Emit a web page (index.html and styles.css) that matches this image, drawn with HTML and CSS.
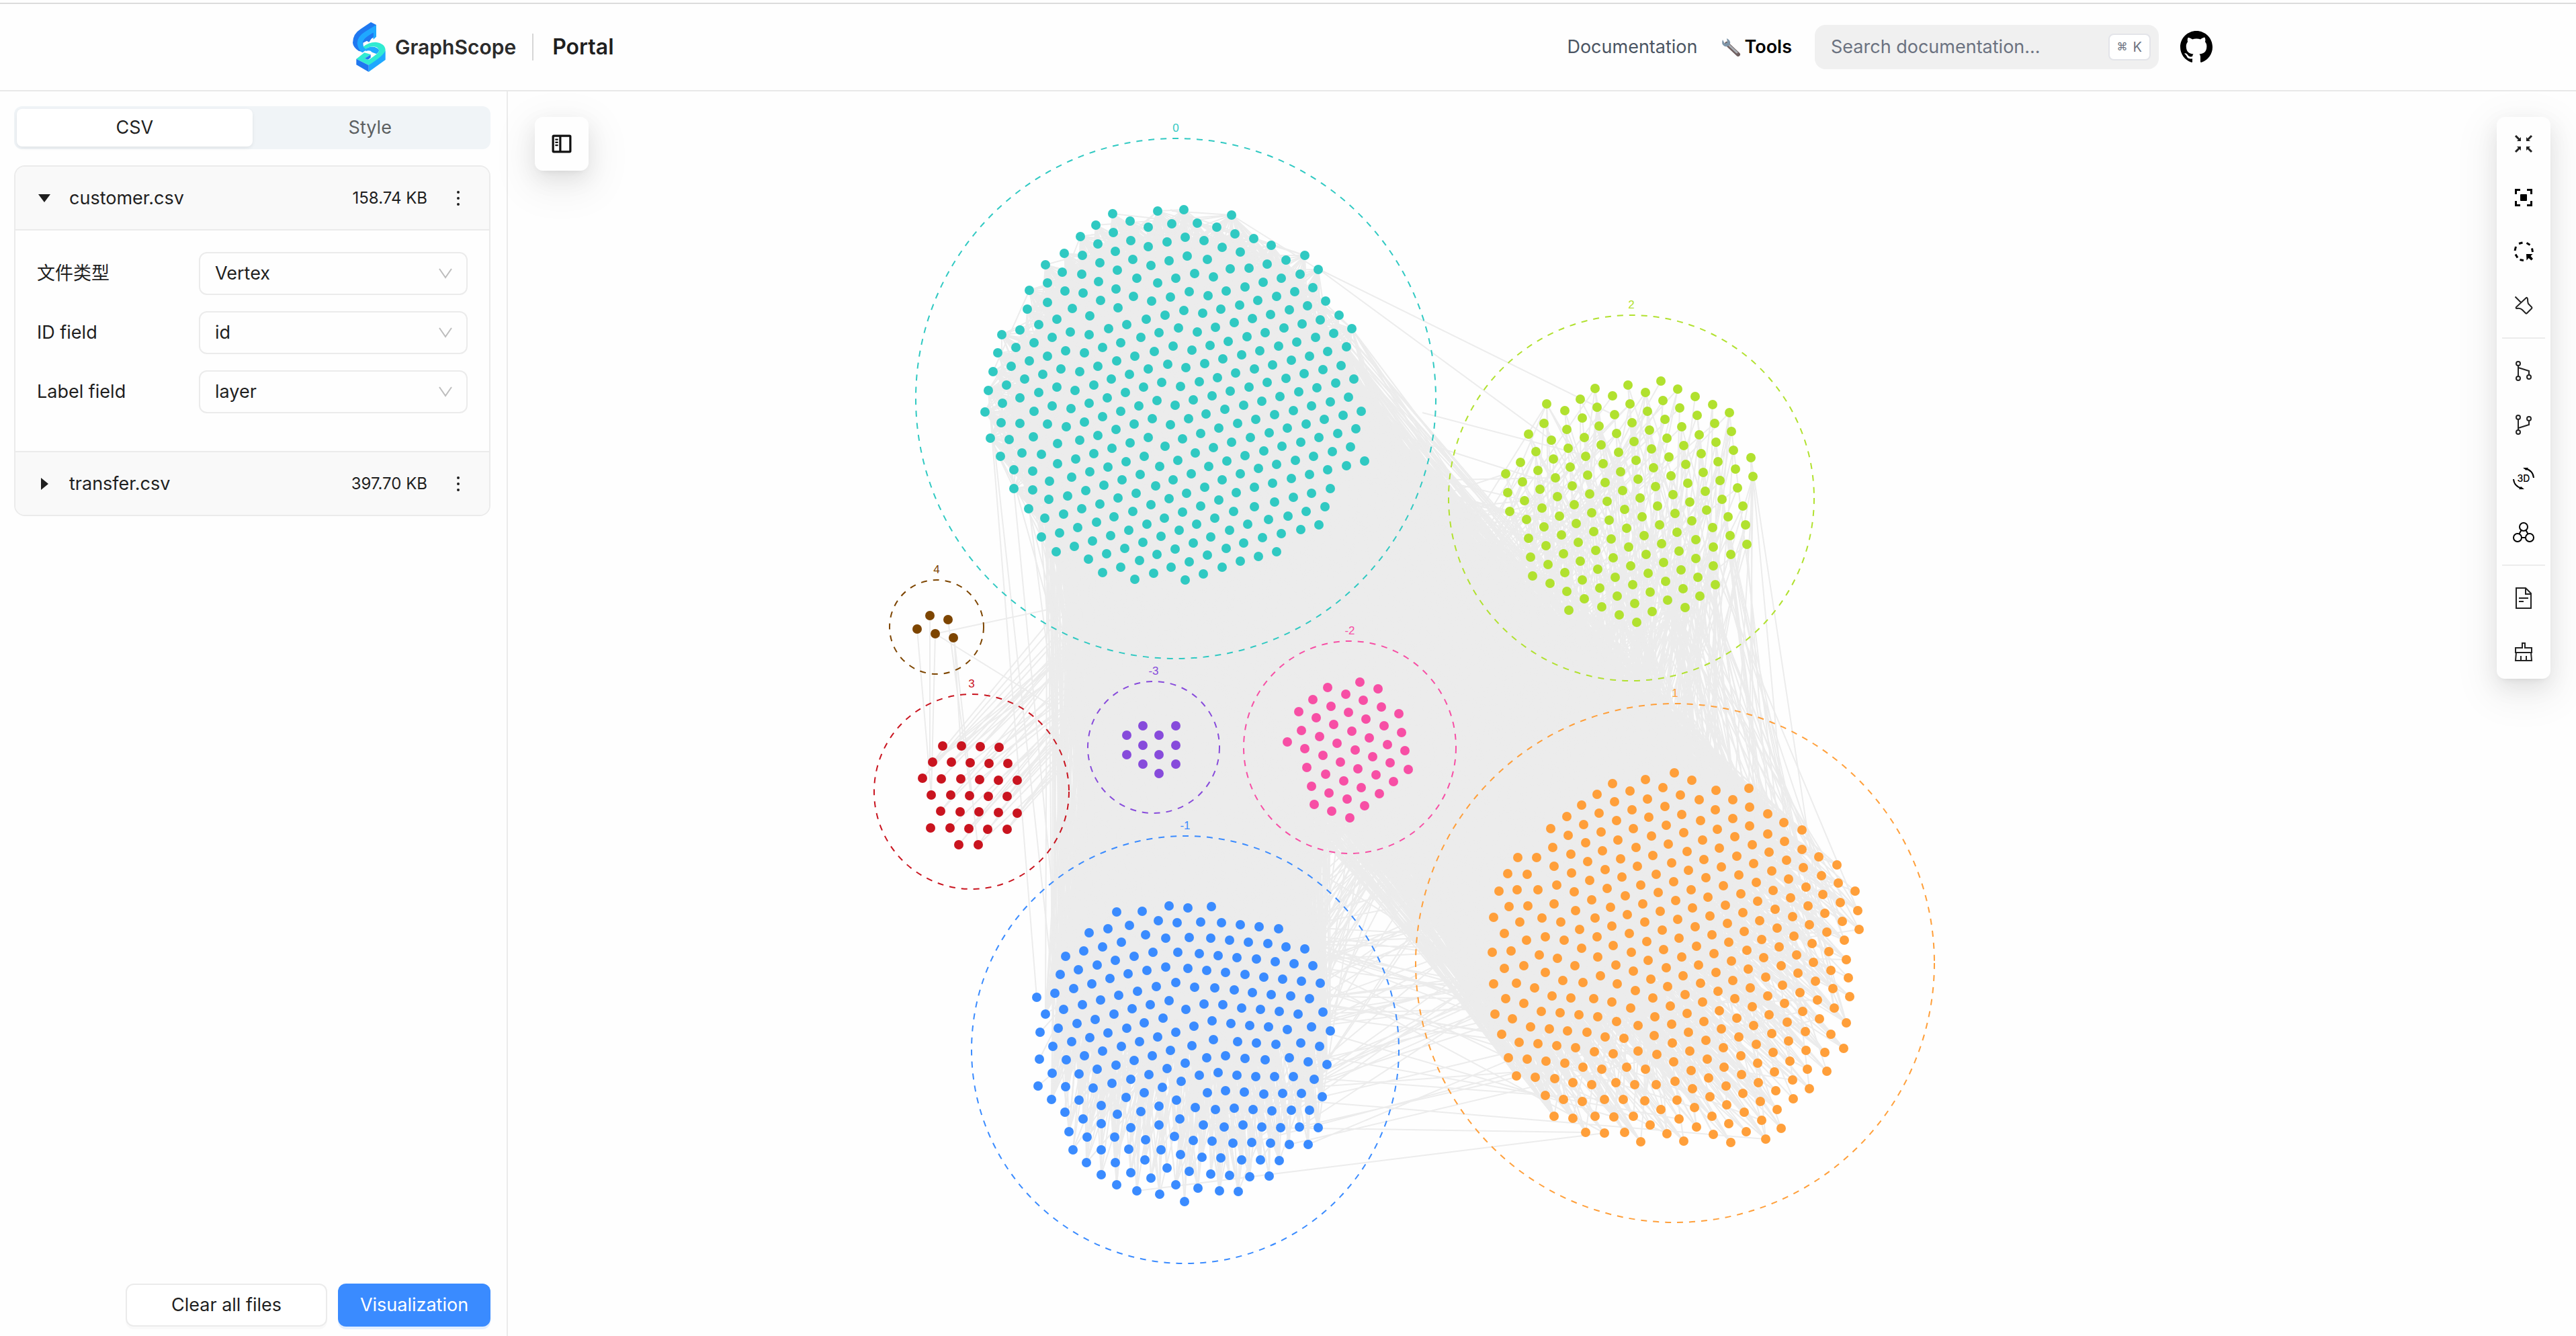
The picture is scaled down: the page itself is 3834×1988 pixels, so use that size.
FILE: index.html
```html
<!DOCTYPE html>
<html lang="en">
<head>
<meta charset="utf-8">
<meta name="viewport" content="width=device-width, initial-scale=1">
<title>GraphScope Portal</title>
<link rel="stylesheet" href="styles.css">
</head>
<body>
<header class="header">
  <div class="header-inner">
    <a class="brand" href="#">
      <svg class="brand-mark" viewBox="74 98 147 222" aria-hidden="true">
        <path fill="#1f78f0" d="M155 98L110 128Q74 150 74 190Q76 210 100 226L122 232L120 190L179 160V110Z"/>
        <path fill="#1fa8ff" d="M179 110L130 140Q94 162 94 192Q96 218 116 234L136 222L122 206Q112 190 126 174Q132 166 166 145L166 175L179 163Z"/>
        <path fill="#1f78f0" d="M166 145V158L147 187L125 175Q135 162 166 145Z"/>
        <path fill="#1fa8ff" d="M220 225V266L145 320V286Z"/>
        <path fill="#1fa8ff" d="M132 216Q160 200 185 215Q200 225 180 240L160 232Q150 220 132 228Z"/>
        <path fill="#30ebd2" d="M120 208Q146 187 175 187Q218 192 220 222Q218 244 145 290L90 262L126 234L155 242L127 260L145 266Q190 238 192 225Q186 204 160 207Q142 210 132 217Z"/>
        <path fill="#1f78f0" d="M90 262L145 290V320L90 288Z"/>
        <path fill="#1f78f0" d="M154 243V256L143 265L127 260Z"/>
      </svg>
      <span class="brand-name">GraphScope</span>
      <span class="brand-section">Portal</span>
    </a>
    <nav class="nav">
      <a class="nav-link" href="#">Documentation</a>
      <a class="nav-link nav-link-active" href="#">
        <svg class="wrench" viewBox="0 0 30 28" aria-hidden="true">
          <path d="M9 9L26 25" stroke="#6f5f5f" stroke-width="6" stroke-linecap="round"/>
          <path d="M10 9L24 22" stroke="#a8adb3" stroke-width="3" stroke-linecap="round"/>
          <path d="M3 3Q0 10 6 13Q12 14 14 9Q15 4 9 1L10 7L6 9Z" fill="#7d95a8"/>
        </svg>
        Tools
      </a>
      <label class="search">
        <input class="search-input" type="search" placeholder="Search documentation..." aria-label="Search documentation">
        <kbd class="search-key"><span class="cmd">⌘</span>K</kbd>
      </label>
      <a class="github" href="#" aria-label="GitHub">
        <svg viewBox="0 0 16 16" fill="#000"><path d="M8 0C3.58 0 0 3.58 0 8c0 3.54 2.29 6.53 5.47 7.59.4.07.55-.17.55-.38 0-.19-.01-.82-.01-1.49-2.01.37-2.53-.49-2.69-.94-.09-.23-.48-.94-.82-1.13-.28-.15-.68-.52-.01-.53.63-.01 1.08.58 1.23.82.72 1.21 1.87.87 2.33.66.07-.52.28-.87.51-1.07-1.78-.2-3.64-.89-3.64-3.95 0-.87.31-1.59.82-2.15-.08-.2-.36-1.02.08-2.12 0 0 .67-.21 2.2.82.64-.18 1.32-.27 2-.27s1.36.09 2 .27c1.53-1.04 2.2-.82 2.2-.82.44 1.1.16 1.92.08 2.12.51.56.82 1.27.82 2.15 0 3.07-1.87 3.75-3.65 3.95.29.25.54.73.54 1.48 0 1.07-.01 1.93-.01 2.2 0 .21.15.46.55.38A8.01 8.01 0 0 0 16 8c0-4.42-3.58-8-8-8z"/></svg>
      </a>
    </nav>
  </div>
</header>

<div class="workspace">
  <aside class="sidebar">
    <div class="tabs" role="tablist">
      <button class="tab tab-selected" role="tab" aria-selected="true">CSV</button>
      <button class="tab" role="tab" aria-selected="false">Style</button>
    </div>

    <div class="files">
      <section class="file">
        <div class="file-head">
          <button class="file-toggle" aria-expanded="true">
            <svg class="caret" viewBox="0 0 18 18" aria-hidden="true"><path d="M0 3H18L9 15Z"/></svg>
            customer.csv
          </button>
          <span class="file-size">158.74 KB</span>
          <button class="more" aria-label="More"><svg viewBox="0 0 24 24"><circle cx="12" cy="3" r="2"/><circle cx="12" cy="12" r="2"/><circle cx="12" cy="21" r="2"/></svg></button>
        </div>
        <form class="fields">
          <label class="field-label" for="kind">文件类型</label>
          <div class="select">
            <select id="kind"><option>Vertex</option><option>Edge</option></select>
            <svg class="chevron" viewBox="0 0 22 16" aria-hidden="true"><path d="M2 1L11 14L20 1"/></svg>
          </div>
          <label class="field-label" for="idf">ID field</label>
          <div class="select">
            <select id="idf"><option>id</option></select>
            <svg class="chevron" viewBox="0 0 22 16" aria-hidden="true"><path d="M2 1L11 14L20 1"/></svg>
          </div>
          <label class="field-label" for="labelf">Label field</label>
          <div class="select">
            <select id="labelf"><option>layer</option></select>
            <svg class="chevron" viewBox="0 0 22 16" aria-hidden="true"><path d="M2 1L11 14L20 1"/></svg>
          </div>
        </form>
      </section>
      <section class="file">
        <div class="file-head">
          <button class="file-toggle" aria-expanded="false">
            <svg class="caret" viewBox="0 0 18 18" aria-hidden="true"><path d="M4 0V18L15 9Z"/></svg>
            transfer.csv
          </button>
          <span class="file-size">397.70 KB</span>
          <button class="more" aria-label="More"><svg viewBox="0 0 24 24"><circle cx="12" cy="3" r="2"/><circle cx="12" cy="12" r="2"/><circle cx="12" cy="21" r="2"/></svg></button>
        </div>
      </section>
    </div>

    <div class="actions">
      <button class="btn btn-clear">Clear all files</button>
      <button class="btn btn-primary">Visualization</button>
    </div>
  </aside>

  <main class="stage">
    <svg class="graph" id="graph" viewBox="756 136 3078 1852" role="img" aria-label="Clustered graph"></svg>

    <button class="panel-toggle" aria-label="Toggle sidebar">
      <svg viewBox="0 0 28 28" fill="none" stroke="#111" stroke-width="3"><rect x="2" y="3" width="24" height="22" rx="1"/><path d="M12 3V25"/><path d="M5 8H9M5 12H9M5 16H9" stroke-width="2"/></svg>
    </button>

    <div class="toolbar" role="toolbar">
      <button class="tool" aria-label="Fit center"><svg viewBox="0 0 32 32"><path d="M4 4L11 11M28 4L21 11M4 28L11 21M28 28L21 21" stroke-width="3"/><path d="M12 6V12H6ZM20 6V12H26ZM6 20H12V26ZM26 20H20V26Z" fill="#222" stroke="none"/></svg></button>
      <button class="tool" aria-label="Fit view"><svg viewBox="0 0 32 32"><path d="M4.500 11V4.500H11M21 4.500H27.500V11M27.500 21V27.500H21M11 27.500H4.500V21" stroke="#000" stroke-width="3"/><rect x="11" y="11" width="10" height="10" rx="1" fill="#000" stroke="none"/></svg></button>
      <button class="tool" aria-label="Brush select"><svg viewBox="0 0 32 32"><path d="M9 4.500L14.500 3M20.500 3.500L25.500 6.500M28.500 11.500L29.500 17M3 15L4.500 9M4 20.500L7 25.500M10.500 28.500L16 29.500" stroke="#000" stroke-width="3"/><path d="M20 20H29.500L26.500 23L30 27L27.500 29.500L23.500 26L20.500 29.500Z" fill="#000" stroke="none"/></svg></button>
      <button class="tool" aria-label="Lasso select"><svg viewBox="0 0 32 32"><path d="M3.500 3.500L12 12M20 5L5 19Q4 21 6 21Q11 20 14 23L19 28Q20 29 21 28L28 21Q29 20 28 19L23 14Q22 12 22 7Q21 4 20 5Z"/></svg></button>
      <hr class="tool-rule">
      <button class="tool" aria-label="Successors"><svg viewBox="0 0 32 32"><circle cx="8" cy="5" r="3"/><circle cx="8" cy="27" r="3"/><circle cx="24" cy="25" r="3"/><path d="M8 8V24M8 11L24 16V22"/></svg></button>
      <button class="tool" aria-label="Predecessors"><svg viewBox="0 0 32 32"><circle cx="8" cy="5" r="3"/><circle cx="8" cy="27" r="3"/><circle cx="24" cy="7" r="3"/><path d="M8 8V24M8 21L24 16V10"/></svg></button>
      <button class="tool" aria-label="3D view"><svg viewBox="0 0 32 32"><path d="M18 1Q30 4 31 15M14 31Q2 28 1 17" stroke="#000" stroke-width="2"/><path d="M15 0L23 0L20 4ZM17 32L9 32L12 28Z" fill="#000" stroke="none"/><text x="16" y="21" class="tool-text" text-anchor="middle">3D</text></svg></button>
      <button class="tool" aria-label="Cluster"><svg viewBox="0 0 32 32"><g stroke="#000"><circle cx="16" cy="8" r="6"/><circle cx="7" cy="24" r="6"/><circle cx="25" cy="24" r="6"/><path d="M12.500 13L9.500 18.500M19.500 13L22.500 18.500M13 24H19"/></g></svg></button>
      <hr class="tool-rule">
      <button class="tool" aria-label="Report"><svg viewBox="0 0 32 32"><path d="M5 1H19L27 9V31H5ZM19 1V10H27M9 16H23M9 21H16"/></svg></button>
      <button class="tool" aria-label="Clear"><svg viewBox="0 0 32 32"><path d="M4 17V10H14V3H18V10H28V17ZM5 17L4 29H28L27 17M12 29V22M20 29V22"/></svg></button>
    </div>
  </main>
</div>
<script src="graph.js"></script>
</body>
</html>
```
FILE: styles.css
```css
* { box-sizing: border-box; }

body {
  margin: 0;
  min-height: 100vh;
  display: flex;
  flex-direction: column;
  background: #fefefe;
  color: #1f1f1f;
  font-family: Inter, "Noto Sans CJK SC", sans-serif;
  font-size: 27px;
  line-height: 44px;
}

button, input, select { font: inherit; color: inherit; }
button { border: 0; background: none; padding: 0; cursor: pointer; }
a { color: inherit; text-decoration: none; }
svg { display: block; }

.header {
  margin-top: 4px;
  border-top: 2px solid #dcdcdc;
  border-bottom: 2px solid #e8e8e8;
}
.header-inner {
  max-width: 2880px;
  height: 128px;
  margin: 0 auto;
  padding: 0 48px;
  display: flex;
  align-items: center;
  justify-content: space-between;
}
.brand { display: flex; align-items: center; }
.brand-mark { width: 49px; height: 74px; }
.brand-name {
  margin-left: 14px;
  padding-right: 24px;
  color: #2b2b2b;
  font-size: 30px;
  font-weight: 600;
  line-height: 40px;
  border-right: 2px solid #d6d6d6;
}
.brand-section {
  margin-left: 28px;
  font-size: 32px;
  font-weight: 600;
}
.nav { display: flex; align-items: center; }
.nav-link { color: #4b5563; margin-right: 34px; display: flex; align-items: center; gap: 6px; }
.nav-link-active { color: #000; font-weight: 600; }
.wrench { width: 30px; height: 28px; fill: none; }
.search {
  width: 512px;
  height: 66px;
  padding: 0 12px 0 24px;
  display: flex;
  align-items: center;
  border-radius: 16px;
  background: #f0f0f0;
}
.search-input {
  flex: 1;
  min-width: 0;
  padding: 0;
  border: 0;
  outline: 0;
  background: none;
}
.search-input::placeholder { color: #6b7280; opacity: 1; }
.search-key {
  height: 40px;
  padding: 0 11px;
  display: flex;
  align-items: center;
  gap: 8px;
  border: 2px solid #e3e4e9;
  border-radius: 8px;
  background: #fff;
  color: #6b7280;
  font-family: Inter, sans-serif;
  font-size: 20px;
}
.cmd { font-family: "DejaVu Sans", sans-serif; font-size: 16px; }
.github { padding: 16px; margin-left: 16px; }
.github svg { width: 48px; height: 48px; }

.workspace { flex: 1; display: flex; min-height: 0; }

.sidebar {
  width: 756px;
  flex: none;
  padding: 22px 24px 14px 21px;
  display: flex;
  flex-direction: column;
  border-right: 2px solid #ebebeb;
}
.tabs {
  height: 64px;
  padding: 4px;
  display: flex;
  border-radius: 12px;
  background: #f0f4f7;
}
.tab { flex: 1; border-radius: 8px; color: #5c5f61; }
.tab-selected {
  background: #fff;
  color: #1f1f1f;
  box-shadow: 0 2px 4px rgba(0, 0, 0, .05), 0 2px 12px -2px rgba(0, 0, 0, .04);
}
.files {
  margin-top: 24px;
  border: 2px solid #ebebeb;
  border-radius: 16px;
  overflow: hidden;
}
.file + .file { border-top: 2px solid #ebebeb; }
.file-head {
  height: 93px;
  padding: 0 34px;
  display: flex;
  align-items: center;
  background: #f9f9f9;
}
.file-toggle { flex: 1; display: flex; align-items: center; gap: 28px; text-align: left; }
.caret { width: 18px; height: 18px; fill: #1f1f1f; }
.file-size { font-size: 24px; }
.more { margin-left: 34px; }
.more svg { width: 24px; height: 24px; fill: #1f1f1f; }
.fields {
  padding: 32px 32px 56px;
  border-top: 2px solid #ebebeb;
  display: grid;
  grid-template-columns: 1fr 400px;
  row-gap: 24px;
  align-items: center;
}
.select { display: grid; align-items: center; }
.select select, .chevron { grid-area: 1 / 1; }
.select select {
  height: 64px;
  padding: 0 22px;
  border: 2px solid #ebebeb;
  border-radius: 12px;
  background: #fefefe;
  appearance: none;
}
.chevron {
  width: 22px;
  height: 16px;
  margin-right: 22px;
  justify-self: end;
  fill: none;
  stroke: #bdbdbd;
  stroke-width: 2px;
  pointer-events: none;
}
.actions { margin-top: auto; display: flex; justify-content: flex-end; gap: 16px; }
.btn { height: 64px; border-radius: 12px; }
.btn-clear {
  width: 300px;
  border: 2px solid #ebebeb;
  background: #fff;
  box-shadow: 0 4px 0 rgba(0, 0, 0, .02);
}
.btn-primary {
  width: 227px;
  background: #3a8bff;
  color: #fff;
  box-shadow: 0 4px 0 #e3efff;
}

.stage { flex: 1; min-width: 0; position: relative; }
.graph { position: absolute; inset: 0; width: 100%; height: 100%; }
.edges { fill: none; stroke: #ececec; stroke-width: 2px; }
.hull { fill: none; stroke-width: 2px; stroke-dasharray: 9 9; }
.hull-label { font-family: "Liberation Sans", sans-serif; font-size: 17px; text-anchor: middle; }

.panel-toggle, .toolbar {
  position: absolute;
  top: 38px;
  width: 80px;
  border-radius: 12px;
  background: #fefefe;
  box-shadow: 0 12px 32px rgba(0, 0, 0, .08), 0 6px 12px -8px rgba(0, 0, 0, .12), 0 18px 56px 16px rgba(0, 0, 0, .05);
}
.panel-toggle { left: 40px; height: 80px; display: grid; place-items: center; }
.panel-toggle svg { width: 30px; height: 30px; }
.toolbar { right: 38px; display: flex; flex-direction: column; }
.tool { height: 80px; display: grid; place-items: center; }
.tool svg { width: 32px; height: 32px; fill: none; stroke: #222; stroke-width: 2px; overflow: visible; }
.tool .tool-text { fill: #000; stroke: none; font-size: 14px; font-weight: 500; }
.tool-rule { width: 64px; margin: 8px; border: 0; height: 2px; background: #ececec; }
```
FILE: graph.js
```js
// Each cluster keeps its nodes on a 1568-unit grid stretched over `frame` (x, y, width, height).
// `rows` are evenly spaced runs: x, y, dx, dy, count.
const GRID = 1568;
const clusters = {
  '0': {
    color: '#30c9c2', hull: [1750, 593, 387], frame: [1340, 160, 820, 840],
    nodes: `605,295 733,288 807,283 942,298 557,327 654,316 705,333 772,323 846,321 901,332 952,350 1005,364 1055,383 1151,411
    513,358 606,348 655,369 706,386 759,374 811,361 864,370 915,388 967,401 1098,423 1045,435 1190,450
    466,405 563,379 519,411 612,400 662,421 713,438 765,426 817,413 873,422 939,448 993,447 1138,462 1085,474
    413,436 461,457 568,432 516,463 618,452 673,474 732,487 784,475 838,461 891,471 980,498 1033,486 1175,500 1122,512
    368,508 418,488 468,510 565,484 521,515 614,504 664,525 716,538 769,526 823,512 875,522 928,510 1070,524 1017,536 1211,538 1159,550
    362,560 419,541 490,558 570,536 620,557 539,578 699,588 753,576 807,563 860,572 913,560 965,548 1107,562 1054,574 1248,577 1196,589
    289,631 341,617 393,602 445,588 484,624 538,631 592,614 645,603 684,639 737,626 791,613 845,623 897,610 950,598 1002,586 1144,601 1091,613 1285,615 1233,627
    277,682 328,667 380,653 432,638 471,675 524,682 576,667 628,653 667,690 722,677 776,663 829,673 881,661 934,649 986,637 1039,625 1181,639 1128,651 1270,665 1217,677
    263,733 315,718 367,704 419,690 457,726 511,733 563,718 615,704 653,741 705,727 761,713 813,723 866,711 918,699 971,687 1023,675 1076,663 1165,690 1112,702 1254,716 1202,728
    251,786 302,770 354,755 406,741 445,777 498,785 550,770 601,755 640,792 692,777 744,763 797,774 850,762 902,750 955,738 1007,726 1060,714 1150,740 1097,752 1291,754 1239,766
    241,846 290,822 341,806 393,792 432,828 485,836 537,821 588,806 627,843 678,828 731,814 783,826 834,812 887,800 939,788 992,776 1044,764 1186,778 1134,790 1276,804 1223,817
    286,875 340,878 380,843 419,880 472,887 523,873 575,858 614,895 666,880 717,865 768,881 820,865 871,851 924,839 977,827 1029,815 1081,802 1171,828 1118,841 1312,843 1260,855
    256,918 309,922 379,915 447,934 511,924 562,910 603,946 654,931 706,917 754,941 804,921 855,905 907,890 959,878 1012,866 1065,853 1207,867 1155,879 1297,893 1244,905
    285,969 347,960 401,963 448,990 499,976 551,961 590,998 642,983 694,968 739,996 790,980 840,960 891,944 943,930 997,916 1050,903 1102,891 1192,917 1139,930 1281,943 1229,956 1321,981
    323,1007 377,1010 424,1037 487,1027 539,1012 579,1049 631,1034 682,1019 726,1051 777,1034 828,1017 877,997 929,981 981,967 1035,954 1087,941 1176,968 1124,980 1269,995 1217,1007
    323,1059 376,1062 423,1089 476,1079 527,1064 568,1101 620,1085 672,1071 713,1104 764,1087 815,1071 866,1054 916,1034 967,1018 1019,1003 1071,992 1164,1019 1112,1031 1223,1059 1171,1071
    366,1114 412,1141 464,1130 516,1115 558,1152 609,1137 661,1122 701,1157 752,1140 804,1123 854,1107 906,1090 956,1070 1007,1055 1060,1043 1118,1083 1066,1095 1208,1109 1155,1122
    401,1192 454,1182 505,1167 546,1204 598,1189 650,1174 691,1208 742,1191 793,1174 844,1158 895,1141 949,1122 1008,1108 1103,1134 1047,1145 1192,1160 1140,1172
    443,1233 495,1218 587,1240 638,1225 680,1259 731,1242 782,1226 833,1209 884,1193 937,1174 989,1157 1084,1183 1030,1194
    535,1255 575,1292 628,1276 668,1310 720,1294 771,1277 822,1261 873,1244 927,1225 978,1209 1071,1234 1019,1246 811,1312 863,1296 916,1276 967,1260`
  },
  '2': {
    color: '#b1e12f', hull: [2428, 741, 272], frame: [2120, 420, 620, 620],
    nodes: `461,459 451,530 393,572 528,483 1022,968 1021,1039 1030,1110 1038,1180 1085,924 1088,996 1087,1067 1095,1138
    1143,883 1150,954 1152,1025 1200,841 1208,912 1213,987 1229,661 1237,732`,
    rows: [[305,721,7.5,71,3],[362,679,7.5,71,7],[420,637,7.5,71,8],[478,595,7.4,71,10],[535,553,7.4,71,10],[586,441,7.4,71,12],[643,399,7.5,71,13],[708,428,7.6,71,13],[766,386,7.6,71,13],[831,415,7.6,71,12],[889,373,7.6,71,13],[954,402,7.5,71,8],[1019,431,7.4,71,7],[1084,461,7.4,71,6],[1149,490,7.5,71,5]]
  },
  '4': {
    color: '#7d4500', hull: [1394, 933, 70], frame: [1340, 160, 820, 840],
    nodes: `84,1411 136,1422 47,1449 99,1461 152,1473`
  },
  '3': {
    color: '#c9141f', hull: [1446, 1178, 145], frame: [1260, 820, 940, 540],
    nodes: `279,1268 327,1269`,
    rows: [[238,841,47,2,4],[213,911,47,2,5],[189,981,47,2,6],[211,1053,47,2,5],[234,1125,47.5,1.5,5],[209,1195,47.3,2,5]]
  },
  '-3': {
    color: '#874bdb', hull: [1717, 1112, 98], frame: [1260, 820, 940, 540],
    nodes: `736,756 817,756 695,797 776,797 736,838 817,838 695,879 776,879 736,920 817,920 776,961`
  },
  '-2': {
    color: '#f74fa5', hull: [2009, 1112, 158], frame: [1260, 820, 940, 540],
    nodes: `1142,936`,
    rows: [[1275,565,44,29,2],[1195,589,44,28.4,5],[1158,641,44,28.4,6],[1122,693,44,28.4,7],[1130,774,44,28.4,7],[1094,826,44,28.4,7],[1190,964,44,28.5,4],[1154,1016,44,28.4,4],[1161,1096,44,28.5,3]]
  },
  '-1': {
    color: '#3a8bff', hull: [1764, 1562, 318], frame: [1420, 1220, 700, 680],
    nodes: `541,315 627,313 717,294 780,301 858,298 451,388 514,374 585,362 681,347 743,353 821,351 892,353 955,360 1018,367 1082,374
    372,468 433,450 494,435 557,420 639,395 706,406 784,403 855,406 918,413 980,419 1045,425 1107,435 1170,442
    354,531 415,515 476,497 538,482 601,467 664,455 747,455 818,458 880,465 943,472 1008,478 1070,487 1133,494 1196,501
    275,609 337,594 398,578 459,562 519,544 581,529 643,516 705,504 780,510 843,517 906,524 970,530 1033,540 1096,547 1159,553 1221,561
    305,667 366,651 427,635 488,619 549,602 611,587 674,572 739,559 801,575 868,577 933,584 995,592 1058,599 1122,605 1184,614
    287,729 348,714 409,698 471,684 532,667 593,649 654,634 717,620 773,651 833,631 896,635 958,645 1021,651 1084,658 1147,667 1229,659
    330,776 391,761 452,746 514,731 575,714 635,697 697,681 740,729 800,709 860,689 923,699 986,705 1048,711 1110,720 1192,711 1254,724
    285,822 373,824 434,809 496,793 557,778 618,762 679,744 722,791 794,774 865,755 946,760 1008,766 1073,771 1156,765 1218,777
    328,869 417,871 478,856 540,842 600,825 661,809 709,854 770,834 842,816 904,809 971,819 1036,824 1118,817 1180,829 1243,840
    281,912 371,916 464,919 526,905 588,889 649,873 695,918 757,898 817,877 880,868 942,876 1005,881 1068,880 1132,880 1201,890
    324,959 416,962 490,979 573,952 634,936 683,983 742,961 844,936 906,929 968,935 1032,940 1096,939 1159,939 1228,949
    369,1004 429,1025 490,1043 545,1010 622,1000 684,1048 753,1025 804,987 871,994 934,989 997,993 1060,998 1124,997 1186,997
    382,1069 443,1089 536,1089 590,1055 638,1097 735,1087 832,1046 900,1053 963,1048 1026,1053 1089,1056 1152,1054 1215,1055
    396,1132 490,1133 583,1131 691,1133 797,1099 860,1103 929,1109 992,1107 1055,1110 1118,1114 1181,1113
    442,1176 537,1175 637,1166 755,1149 826,1157 889,1160 958,1167 1021,1166 1084,1168
    490,1218 590,1210 656,1228 710,1195 785,1206 855,1215 918,1219 986,1225 1050,1222
    543,1253 610,1272 686,1285 740,1251 814,1264 884,1273 947,1276 769,1310`
  },
  '1': {
    color: '#ff9f3a', hull: [2493, 1433, 386], frame: [2080, 1000, 840, 840],
    nodes: `769,280 689,299 817,301 598,309 737,321 646,330 884,328 976,323 555,340 785,342 839,354 931,354 694,352 603,361 512,370 742,373
    883,382 979,375 651,382 560,392 1028,394 790,395 470,401 699,404 841,413 931,406 608,413 517,423 747,426 979,428 1074,418 426,434
    656,435 889,437 795,447 565,444 1123,439 475,454 705,456 1028,449 937,458 613,466 847,467 523,475 753,478 1075,470 985,480
    431,487 570,496 662,487 804,498 894,489 481,506 709,509 1033,501 1124,492 943,511 335,516 387,516 619,518 852,520 528,527
    761,530 1081,522 990,532 1171,513 434,540 667,539 900,542 576,549 809,551 1220,535 1039,553 1128,544 307,560 361,561 484,558
    719,561 948,563 624,570 857,572 534,579 767,582 1177,566 1086,575 996,585 676,591 442,592 905,594 582,601 1225,587 1134,597
    281,609 333,605 391,604 491,610 724,613 815,604 1044,606 953,616 633,622 1272,609 1182,618 539,632 772,634 863,625 1092,628
    1001,637 681,644 1230,640 435,644 310,652 362,649 591,653 911,647 820,656 1140,649 1049,658 495,663 730,665 959,668 1278,662
    266,682 401,684 548,684 639,674 868,678 1188,671 1097,680 778,687 339,695 453,694 687,695 1007,690 916,699 1236,692
    596,706 1145,702 826,708 505,714 1055,711 735,717 964,720 1283,714 296,726 644,727 1193,723 874,730 411,736 554,736 1102,733
    359,744 463,745 783,739 1012,742 692,748 921,751 1241,745 1151,754 600,760 831,761 1060,764 511,767 740,770 970,773 264,778
    316,774 1198,776 650,779 879,782 393,785 1108,785 557,791 789,791 1017,794 445,795 697,800 927,803 1246,798 1156,807 350,815
    606,813 837,813 1065,816 493,816 746,822 975,825 297,823 1204,828 655,831 884,834 1113,837 411,835 564,844 794,844 1022,847
    703,853 932,856 1252,850 460,857 1161,859 842,865 515,863 331,864 267,866 610,867 1070,869 751,874 381,878 980,878 1209,880
    660,884 890,887 1119,890 799,896 429,900 1028,900 482,905 709,905 1257,902 300,907 545,907 937,908 1167,911 596,917 847,917
    350,921 1076,921 757,927 985,930 647,934 1214,933 895,940 399,942 451,947 1125,942 804,948 270,950 504,952 1033,952 556,958
    714,958 943,961 320,964 1172,964 608,970 852,970 1082,973 762,979 1246,975 668,982 990,982 369,986 421,991 900,992 473,996
    1133,998 526,1000 809,1001 1039,1004 1204,1006 290,1007 713,1010 577,1013 948,1013 629,1018 857,1022 1087,1025 338,1028
    764,1031 390,1033 996,1035 443,1038 495,1043 905,1044 1239,1045 1135,1051 668,1052 812,1053 546,1055 1044,1056 1188,1056
    599,1061 721,1062 953,1066 308,1072 360,1076 860,1075 1091,1080 412,1081 768,1083 465,1086 1001,1087 516,1098 637,1097
    907,1097 568,1104 689,1104 1139,1104 816,1106 1048,1110 1192,1108 956,1118 331,1121 383,1126 436,1130 865,1127 1097,1133
    771,1136 487,1141 606,1140 1003,1140 539,1147 658,1146 719,1146 912,1149 820,1158 1144,1158 1051,1162 960,1171 410,1176
    868,1180 461,1188 574,1187 627,1188 686,1190 777,1189 1099,1186 514,1193 1008,1192 915,1202 825,1210 732,1216 1055,1215
    963,1223 435,1233 549,1233 601,1235 656,1233 873,1233 487,1239 782,1241 1011,1245 921,1254 701,1259 830,1263 1066,1267
    968,1276 523,1278 575,1280 630,1278 748,1282 878,1285 676,1304 796,1303 926,1306 1022,1297`
  }
};

// Edge groups: source, target, count, and optional node filters.
const inner = p => p[0] > 1552;
const lowShoulder = p => p[0] < 1900 || p[1] > 470;
const groups = [
  ['0', '0', 3200],
  ['0', '-1', 2900, inner, p => p[0] > 1552 && p[1] < 1640],
  ['0', '-1', 420, inner, p => p[1] >= 1640],
  ['0', '-1', 110],
  ['0', '1', 3700, lowShoulder, p => p[0] + p[1] < 3980],
  ['0', '1', 520, lowShoulder, p => p[0] + p[1] >= 3980],
  ['-2', '1', 160], ['-2', '-1', 60],
  ['0', '2', 22, p => p[1] > 560 && p[0] < 1950, p => p[1] > 700 && p[0] < 2400],
  ['2', '1', 330], ['2', '-2', 30], ['2', '-1', 60],
  ['-1', '1', 60, p => p[0] > 1780 && p[1] < 1720],
  ['3', '0', 42, null, p => p[0] > 1820 && p[1] > 560]
];
const pinned = [
  [1392, 943, 2300, 748], [1392, 943, 2240, 1470], [1392, 943, 1386, 1183], [1384, 916, 1384, 1134],
  [1365, 936, 1386, 1183], [1411, 922, 1445, 1184], [1420, 949, 1430, 1110], [1420, 949, 1455, 1256],
  [1962, 400, 2403, 618], [1962, 400, 2309, 655], [2117, 614, 2360, 678], [1744, 314, 1833, 320],
  [1833, 320, 1955, 480], [1833, 320, 1834, 440], [1742, 312, 1942, 380], [1692, 1772, 2388, 1686]
];

// Fixed-seed generator so that the layout draws the same on each load.
let seed = 20231;
const random = () => (seed = (seed * 1664525 + 1013904223) % 4294967296) / 4294967296;
const pick = list => list[Math.floor(random() * list.length)];

function place(cluster) {
  const [fx, fy, fw, fh] = cluster.frame;
  const list = cluster.nodes.trim().split(/\s+/).map(pair => pair.split(',').map(Number));
  for (const [x, y, dx, dy, n] of cluster.rows || []) {
    for (let i = 0; i < n; i++) list.push([x + dx * i, y + dy * i]);
  }
  return list.map(([x, y]) => [Math.round(fx + x * fw / GRID), Math.round(fy + y * fh / GRID)]);
}

const svg = document.getElementById('graph');
function add(name, attrs, text) {
  const el = document.createElementNS('http://www.w3.org/2000/svg', name);
  for (const key in attrs) el.setAttribute(key, attrs[key]);
  if (text) el.textContent = text;
  svg.appendChild(el);
}

const points = {};
for (const id in clusters) points[id] = place(clusters[id]);

const lines = pinned.slice();
for (const [from, to, count, keepFrom, keepTo] of groups) {
  const a = keepFrom ? points[from].filter(keepFrom) : points[from];
  const b = keepTo ? points[to].filter(keepTo) : points[to];
  for (let i = 0; i < count; i++) lines.push([...pick(a), ...pick(b)]);
}
for (let i = 0; i < lines.length; i += 100) {
  add('path', { class: 'edges', d: lines.slice(i, i + 100).map(l => `M${l[0]} ${l[1]}L${l[2]} ${l[3]}`).join('') });
}

for (const id in clusters) {
  const { color, hull: [cx, cy, r] } = clusters[id];
  add('circle', { class: 'hull', cx, cy, r, stroke: color });
  add('text', { class: 'hull-label', x: cx, y: cy - r - 10, fill: color }, id);
  for (const [x, y] of points[id]) add('circle', { cx: x, cy: y, r: 7, fill: color });
}
```
